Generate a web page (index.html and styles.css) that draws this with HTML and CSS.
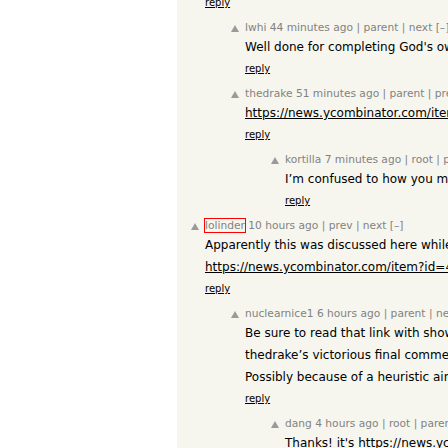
FILE: index.html
```html
<!DOCTYPE html>
<html>
<head>
<meta charset="utf-8">
<link rel="stylesheet" href="styles.css">
</head>
<body>
<div class="page">
  <div class="gutter"></div>
  <div class="thread">
    <div class="list">
      <div class="comment lvl0 tail">
        <div class="vote"></div>
        <div class="body">
          <div class="reply"><a href="#">reply</a></div>
        </div>
      </div>

      <div class="comment lvl1">
        <div class="vote"><svg width="10" height="10" viewBox="0 0 10 10"><polygon points="0,8 4,1 8,8" fill="#9a9a9a"/></svg></div>
        <div class="body">
          <div class="meta"><span class="user">lwhi</span> 44 minutes ago | parent | next [–]</div>
          <div class="text"><p>Well done for completing God's own work, and congratulations on the result.</p></div>
          <div class="reply"><a href="#">reply</a></div>
        </div>
      </div>

      <div class="comment lvl1">
        <div class="vote"><svg width="10" height="10" viewBox="0 0 10 10"><polygon points="0,8 4,1 8,8" fill="#9a9a9a"/></svg></div>
        <div class="body">
          <div class="meta"><span class="user">thedrake</span> 51 minutes ago | parent | prev | next [–]</div>
          <div class="text"><p><a href="#">https://news.ycombinator.com/item?id=42458417</a></p></div>
          <div class="reply"><a href="#">reply</a></div>
        </div>
      </div>

      <div class="comment lvl2">
        <div class="vote"><svg width="10" height="10" viewBox="0 0 10 10"><polygon points="0,8 4,1 8,8" fill="#9a9a9a"/></svg></div>
        <div class="body">
          <div class="meta"><span class="user">kortilla</span> 7 minutes ago | root | parent | next [–]</div>
          <div class="text"><p>I’m confused to how you managed that one.</p></div>
          <div class="reply"><a href="#">reply</a></div>
        </div>
      </div>

      <div class="comment lvl0">
        <div class="vote"><svg width="10" height="10" viewBox="0 0 10 10"><polygon points="0,8 4,1 8,8" fill="#9a9a9a"/></svg></div>
        <div class="body">
          <div class="meta"><span class="user op">lolinder</span> 10 hours ago | prev | next [–]</div>
          <div class="text">
            <p>Apparently this was discussed here while it was happening:</p>
            <p><a href="#">https://news.ycombinator.com/item?id=42458417</a></p>
          </div>
          <div class="reply"><a href="#">reply</a></div>
        </div>
      </div>

      <div class="comment lvl1">
        <div class="vote"><svg width="10" height="10" viewBox="0 0 10 10"><polygon points="0,8 4,1 8,8" fill="#9a9a9a"/></svg></div>
        <div class="body">
          <div class="meta"><span class="user">nuclearnice1</span> 6 hours ago | parent | next [–]</div>
          <div class="text">
            <p>Be sure to read that link with showdead on.</p>
            <p>thedrake’s victorious final comment is flagged.</p>
            <p>Possibly because of a heuristic aimed at spam.</p>
          </div>
          <div class="reply"><a href="#">reply</a></div>
        </div>
      </div>

      <div class="comment lvl2">
        <div class="vote"><svg width="10" height="10" viewBox="0 0 10 10"><polygon points="0,8 4,1 8,8" fill="#9a9a9a"/></svg></div>
        <div class="body">
          <div class="meta"><span class="user">dang</span> 4 hours ago | root | parent | next [–]</div>
          <div class="text"><p>Thanks! it's https://news.ycombinator.com/item?id=42459999</p></div>
          <div class="reply"><a href="#">reply</a></div>
        </div>
      </div>
    </div>
  </div>
</div>
</body>
</html>
```

FILE: styles.css
```css
html, body {
  margin: 0;
  padding: 0;
  background: #ffffff;
}

.page {
  display: flex;
  width: 448px;
  height: 448px;
  overflow: hidden;
  font-family: "DejaVu Sans", Verdana, sans-serif;
}

.gutter {
  width: 177px;
  flex: none;
  background: #ffffff;
}

.thread {
  flex: 1;
  min-width: 0;
  background: #f6f6ef;
  overflow: hidden;
}

.list {
  margin-top: -8px;
  padding-left: 14px;
  display: flex;
  flex-direction: column;
  gap: 7px;
}

.comment {
  display: flex;
  white-space: nowrap;
}

.lvl1 { padding-left: 40px; }
.lvl2 { padding-left: 80px; }

.vote {
  width: 14px;
  flex: none;
  padding-top: 3px;
}

.vote svg {
  display: block;
}

.body {
  min-width: 0;
}

.meta {
  height: 14px;
  line-height: 14px;
  font-size: 10.67px;
  color: #828282;
}

.user.op {
  outline: 1px solid #ff0000;
  outline-offset: 0;
}

.text {
  margin-top: 1px;
  font-size: 12px;
  color: #000000;
}

.text p {
  margin: 0;
  line-height: 22px;
}

.text a, .reply a {
  color: #000000;
  text-decoration: underline;
}

.reply {
  font-size: 10px;
  line-height: 22px;
}
```
